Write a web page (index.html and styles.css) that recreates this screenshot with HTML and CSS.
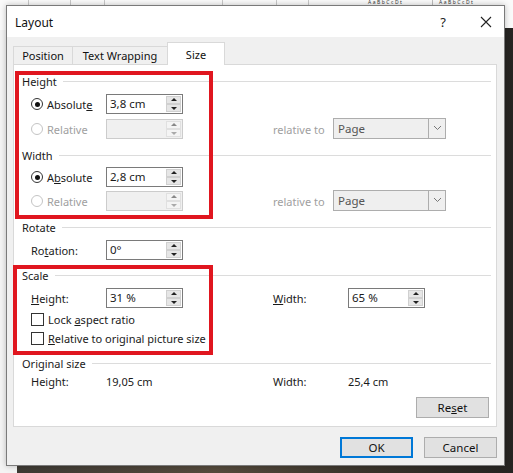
FILE: index.html
```html
<!DOCTYPE html>
<html>
<head>
<meta charset="utf-8">
<link rel="stylesheet" href="styles.css">
</head>
<body>
<div class="backdrop">
  <div class="ribbon">
    <span class="rib-line l1"></span><span class="rib-line l2"></span><span class="rib-line l3"></span><span class="rib-line l4"></span><span class="rib-line l5"></span><span class="rib-line l6"></span>
    <span class="rib-style s1">AaBbCcDt</span><span class="rib-style s2">AaBbCcDt</span>
  </div>
  <div class="photo"></div>
</div>

<div class="dialog">
  <div class="titlebar">
    <span class="title">Layout</span>
    <span class="help">?</span>
    <svg class="close" width="12" height="12" viewBox="0 0 12 12"><path d="M1 1L11 11M11 1L1 11" stroke="#222" stroke-width="1.1" fill="none"/></svg>
  </div>

  <div class="tabs">
    <div class="tab t-pos">Position</div>
    <div class="tab t-wrap">Text Wrapping</div>
    <div class="tab active">Size</div>
  </div>

  <div class="panel">
    <div class="hdr"><span>Height</span></div>
    <div class="row r-first">
      <label class="radio"><span class="dot on"></span><span>Absolut<u>e</u></span></label>
      <div class="spin"><span class="val">3,8 cm</span><span class="arrows"><i class="up"></i><i class="dn"></i></span></div>
    </div>
    <div class="row r-next">
      <label class="radio dis"><span class="dot"></span><span>Relative</span></label>
      <div class="spin dis"><span class="val"></span><span class="arrows"><i class="up"></i><i class="dn"></i></span></div>
      <span class="gap"></span>
      <span class="lbl dis">relative to</span>
      <div class="select"><span class="val">Page</span><span class="chev"><svg width="9" height="6" viewBox="0 0 9 6"><path d="M1 1L4.5 4.5L8 1" stroke="#777" stroke-width="1" fill="none"/></svg></span></div>
    </div>

    <div class="hdr h-width"><span>Width</span></div>
    <div class="row r-first2">
      <label class="radio"><span class="dot on"></span><span>A<u>b</u>solute</span></label>
      <div class="spin"><span class="val">2,8 cm</span><span class="arrows"><i class="up"></i><i class="dn"></i></span></div>
    </div>
    <div class="row r-next2">
      <label class="radio dis"><span class="dot"></span><span>Relative</span></label>
      <div class="spin dis"><span class="val"></span><span class="arrows"><i class="up"></i><i class="dn"></i></span></div>
      <span class="gap"></span>
      <span class="lbl dis">relative to</span>
      <div class="select"><span class="val">Page</span><span class="chev"><svg width="9" height="6" viewBox="0 0 9 6"><path d="M1 1L4.5 4.5L8 1" stroke="#777" stroke-width="1" fill="none"/></svg></span></div>
    </div>

    <div class="hdr h-rotate"><span>Rotate</span></div>
    <div class="row r-first">
      <span class="lbl"><span>Ro<u>t</u>ation:</span></span>
      <div class="spin"><span class="val">0°</span><span class="arrows"><i class="up"></i><i class="dn"></i></span></div>
    </div>

    <div class="hdr h-scale"><span>Scale</span></div>
    <div class="row r-first">
      <span class="lbl"><span><u>H</u>eight:</span></span>
      <div class="spin"><span class="val">31 %</span><span class="arrows"><i class="up"></i><i class="dn"></i></span></div>
      <span class="gap"></span>
      <span class="lbl"><span><u>W</u>idth:</span></span>
      <div class="spin"><span class="val">65 %</span><span class="arrows"><i class="up"></i><i class="dn"></i></span></div>
    </div>
    <div class="row r-check r-check1">
      <label class="check"><span class="box"></span><span>Lock <u>a</u>spect ratio</span></label>
    </div>
    <div class="row r-check">
      <label class="check"><span class="box"></span><span><u>R</u>elative to original picture size</span></label>
    </div>

    <div class="hdr h-orig"><span>Original size</span></div>
    <div class="row r-orig">
      <span class="lbl">Height:</span>
      <span class="txt">19,05 cm</span>
      <span class="gap"></span>
      <span class="lbl">Width:</span>
      <span class="txt">25,4 cm</span>
    </div>
    <div class="reset-row">
      <button class="btn">Re<u>s</u>et</button>
    </div>

    <div class="mark mark1"></div>
    <div class="mark mark2"></div>
  </div>

  <div class="footer">
    <button class="btn ok">OK</button>
    <button class="btn">Cancel</button>
  </div>
</div>
</body>
</html>
```

FILE: styles.css
```css
html, body {
  margin: 0;
  padding: 0;
}
body {
  width: 513px;
  height: 473px;
  overflow: hidden;
  position: relative;
  background: #f4f4f4;
  font-family: "Noto Sans", "Open Sans", sans-serif;
  font-size: 11px;
  color: #1a1a1a;
}
.backdrop {
  position: absolute;
  left: 0; top: 0; right: 0; bottom: 0;
  z-index: 0;
}
.ribbon {
  position: absolute;
  left: 0; top: 0; right: 0; height: 30px;
  background: #fafafa;
}
.rib-line {
  position: absolute;
  top: 0;
  width: 1px;
  height: 6px;
  background: #c8c8c8;
}
.l1 { left: 28px; } .l2 { left: 70px; } .l3 { left: 104px; } .l4 { left: 222px; } .l5 { left: 276px; } .l6 { left: 308px; }
.rib-style {
  position: absolute;
  top: 0;
  font-size: 5px;
  line-height: 5px;
  color: #333;
  letter-spacing: 1.5px;
}
.s1 { left: 368px; }
.s2 { left: 432px; border-left: 1px solid #bbb; padding-left: 6px; }
.photo {
  position: absolute;
  left: 17px; top: 28px; right: 0; bottom: 0;
  background: linear-gradient(90deg, #3e3a34 0%, #554a3c 40%, #3a342c 70%, #262422 100%);
}
.dialog {
  position: relative;
  z-index: 1;
  margin: 5px 0 0 6px;
  width: 497px;
  height: 459px;
  border: 1px solid #7a7a7a;
  background: #f0f0f0;
  box-shadow: 0 0 6px rgba(0,0,0,0.25);
  display: flex;
  flex-direction: column;
}
.titlebar {
  height: 30px;
  background: #ffffff;
  display: flex;
  align-items: center;
  padding-left: 8px;
  padding-top: 1px;
}
.title {
  font-size: 12px;
  color: #111;
  flex: 1;
}
.help {
  font-size: 13px;
  margin-right: 34px;
  color: #222;
}
.close {
  margin-right: 12px;
}
.tabs {
  display: flex;
  align-items: flex-end;
  height: 27px;
  margin-left: 6px;
  position: relative;
  z-index: 2;
}
.tab {
  height: 17px;
  border: 1px solid #d9d9d9;
  border-bottom: none;
  background: #f0f0f0;
  display: flex;
  align-items: center;
  justify-content: center;
  margin-right: -1px;
  color: #111;
  white-space: nowrap;
}
.t-pos { width: 58px; }
.t-wrap { width: 94px; }
.tab.active {
  height: 22px;
  width: 56px;
  background: #fff;
  margin-bottom: -1px;
}
.panel {
  position: relative;
  margin-left: 6px;
  width: 484px;
  height: 363px;
  box-sizing: border-box;
  border: 1px solid #d9d9d9;
  background: #fff;
  padding-top: 8px;
}
.hdr {
  display: flex;
  align-items: center;
  height: 16px;
  padding-left: 8px;
  padding-right: 5px;
}
.hdr::after {
  content: "";
  flex: 1;
  height: 1px;
  background: #dcdcdc;
  margin-left: 6px;
}
.row {
  display: flex;
  align-items: center;
  height: 20px;
  padding-left: 17px;
}
.r-first { margin-top: 5px; }
.r-next { margin-top: 5px; }
.r-first2 { margin-top: 4px; }
.r-next2 { margin-top: 4px; }
.h-width { margin-top: 8px; }
.h-rotate { margin-top: 8px; }
.h-scale { margin-top: 7px; }
.r-check { height: 16px; margin-top: 3px; }
.h-orig { margin-top: 9px; }
.r-orig { height: 16px; margin-top: 2px; }
.radio, .lbl {
  width: 75px;
  display: flex;
  align-items: center;
  white-space: nowrap;
}
.radio.dis, .lbl.dis { color: #a0a0a0; }
.lbl.dis { width: 60px; }
.txt { width: 77px; }
.gap { width: 90px; }
.dot {
  width: 12px;
  height: 12px;
  border: 1px solid #333;
  border-radius: 50%;
  box-sizing: border-box;
  margin-right: 4px;
  position: relative;
  flex: none;
}
.radio.dis .dot { border-color: #c4c4c4; }
.dot.on::after {
  content: "";
  position: absolute;
  left: 2.5px; top: 2.5px;
  width: 5px; height: 5px;
  border-radius: 50%;
  background: #111;
}
.spin {
  width: 77px;
  height: 20px;
  box-sizing: border-box;
  border: 1px solid #7a7a7a;
  display: flex;
  background: #fff;
}
.spin.dis {
  border-color: #cccccc;
  background: #f0f0f0;
}
.spin .val {
  flex: 1;
  padding-left: 3px;
  line-height: 18px;
  font-size: 11.5px;
}
.arrows {
  width: 16px;
  display: flex;
  flex-direction: column;
  padding: 1px 1px 1px 0;
  box-sizing: border-box;
}
.arrows i {
  flex: 1;
  background: #e6e6e6;
  border: 1px solid #d0d0d0;
  position: relative;
  display: block;
}
.arrows i::after {
  content: "";
  position: absolute;
  left: 50%;
  top: 50%;
  margin-left: -3px;
  border-left: 3px solid transparent;
  border-right: 3px solid transparent;
}
.arrows .up::after { border-bottom: 3px solid #222; margin-top: -2px; }
.arrows .dn::after { border-top: 3px solid #222; margin-top: -1px; }
.spin.dis .arrows i { background: #f4f4f4; border-color: #e0e0e0; }
.spin.dis .arrows .up::after { border-bottom-color: #888; }
.spin.dis .arrows .dn::after { border-top-color: #aaa; }
.select {
  width: 113px;
  height: 21px;
  box-sizing: border-box;
  border: 1px solid #adadad;
  background: #efefef;
  display: flex;
  margin-top: -2px;
}
.select .val {
  flex: 1;
  padding-left: 4px;
  line-height: 19px;
  color: #555;
  font-size: 11.5px;
}
.chev {
  width: 16px;
  border-left: 1px solid #adadad;
  display: flex;
  align-items: center;
  justify-content: center;
}
.check {
  display: flex;
  align-items: center;
  white-space: nowrap;
}
.box {
  width: 13px;
  height: 13px;
  border: 1px solid #333;
  box-sizing: border-box;
  margin-right: 4px;
  background: #fff;
  flex: none;
}
.reset-row {
  display: flex;
  justify-content: flex-end;
  padding-right: 7px;
  margin-top: 8px;
}
.btn {
  width: 73px;
  height: 21px;
  box-sizing: border-box;
  border: 1px solid #adadad;
  background: #e1e1e1;
  font-family: inherit;
  font-size: 11.5px;
  color: #111;
  padding: 0;
}
.footer {
  display: flex;
  justify-content: flex-end;
  gap: 11px;
  padding-right: 7px;
  margin-top: 10px;
}
.btn.ok {
  border: 2px solid #0078d7;
}
.mark {
  position: absolute;
  border: 4px solid #e0161f;
  box-sizing: border-box;
}
.mark1 { left: 1px; top: 6px; width: 198px; height: 148px; }
.mark2 { left: -1px; top: 200px; width: 200px; height: 90px; }
```
